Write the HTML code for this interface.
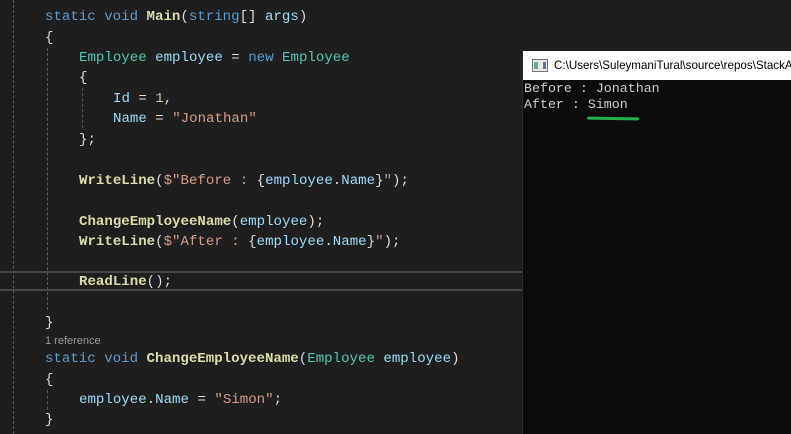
<!DOCTYPE html>
<html><head><meta charset="utf-8"><style>
html,body{margin:0;padding:0;width:791px;height:434px;overflow:hidden;background:#1e1e1e}
.ed{position:absolute;left:0;top:0;width:522px;height:434px;background:#1e1e1e;font-family:"Liberation Mono",monospace;font-size:14.1px;color:#dcdcdc}
.l{position:absolute;white-space:pre;height:20px;line-height:20px;margin-top:1px}
.k{color:#569cd6}.t{color:#4ec9b0}.m{color:#dcdcaa;font-weight:bold}.s{color:#d69d85}.v{color:#9cdcfe}.n{color:#b5cea8}
.ref{position:absolute;font-family:"Liberation Sans",sans-serif;font-size:11px;color:#999;white-space:pre}
.g{position:absolute;width:0;border-left:1px dashed #5a5a5a}
.hl{position:absolute;left:0;width:522px;height:2px;background:#464646}
.con{position:absolute;left:522px;top:51px;width:269px;height:383px;background:#0c0c0c;border-left:1px solid #2e2e2e}
.tb{position:absolute;left:0;top:0;width:269px;height:29px;background:#fff;font-family:"Liberation Sans",sans-serif;font-size:11.6px;color:#000;white-space:nowrap;overflow:hidden}
.ct{position:absolute;left:1px;font-family:"Liberation Mono",monospace;font-size:13.3px;color:#cccccc;white-space:pre;line-height:16px}
</style></head><body>
<div class="ed">
<div class="ref" style="left:45px;top:-9px">0 references</div>
<div class="g" style="left:13px;top:0;height:434px"></div>
<div class="g" style="left:47px;top:48px;height:262px"></div>
<div class="g" style="left:82px;top:88px;height:40px"></div>
<div class="g" style="left:47px;top:390px;height:20px"></div>
<div class="hl" style="top:271px"></div>
<div class="hl" style="top:289px"></div>
<div class="l" style="left:45px;top:6px"><span class="k">static</span> <span class="k">void</span> <span class="m">Main</span>(<span class="k">string</span>[] <span class="v">args</span>)</div>
<div class="l" style="left:45px;top:27px">{</div>
<div class="l" style="left:79px;top:47px"><span class="t">Employee</span> <span class="v">employee</span> = <span class="k">new</span> <span class="t">Employee</span></div>
<div class="l" style="left:79px;top:67px">{</div>
<div class="l" style="left:113px;top:88px"><span class="v">Id</span> = <span class="n">1</span>,</div>
<div class="l" style="left:113px;top:108px"><span class="v">Name</span> = <span class="s">"Jonathan"</span></div>
<div class="l" style="left:79px;top:129px">};</div>
<div class="l" style="left:79px;top:170px"><span class="m">WriteLine</span>(<span class="s">$"Before : </span>{<span class="v">employee</span>.<span class="v">Name</span>}<span class="s">"</span>);</div>
<div class="l" style="left:79px;top:211px"><span class="m">ChangeEmployeeName</span>(<span class="v">employee</span>);</div>
<div class="l" style="left:79px;top:231px"><span class="m">WriteLine</span>(<span class="s">$"After : </span>{<span class="v">employee</span>.<span class="v">Name</span>}<span class="s">"</span>);</div>
<div class="l" style="left:79px;top:271px"><span class="m">ReadLine</span>();</div>
<div class="l" style="left:45px;top:312px">}</div>
<div class="ref" style="left:45px;top:335px">1 reference</div>
<div class="l" style="left:45px;top:348px"><span class="k">static</span> <span class="k">void</span> <span class="m">ChangeEmployeeName</span>(<span class="t">Employee</span> <span class="v">employee</span>)</div>
<div class="l" style="left:45px;top:369px">{</div>
<div class="l" style="left:79px;top:389px"><span class="v">employee</span>.<span class="v">Name</span> = <span class="s">"Simon"</span>;</div>
<div class="l" style="left:45px;top:409px">}</div>
</div>
<div class="con">
<div class="tb">
<div style="position:absolute;left:9px;top:8px;width:14px;height:11px;border:1px solid #777;background:#e8e8e8"><div style="position:absolute;left:1px;top:2px;width:4px;height:7px;background:#6a9"></div><div style="position:absolute;right:1px;top:2px;width:3px;height:7px;background:#57a"></div></div>
<div style="position:absolute;left:31px;top:8px">C:\Users\SuleymaniTural\source\repos\StackA</div>
</div>
<div class="ct" style="top:30px">Before : Jonathan</div>
<div class="ct" style="top:46px">After : Simon</div>
<div style="position:absolute;left:64px;top:66px;width:52px;height:3px;background:#22b24c;border-radius:2px;transform:rotate(1deg)"></div>
</div>
</body></html>
